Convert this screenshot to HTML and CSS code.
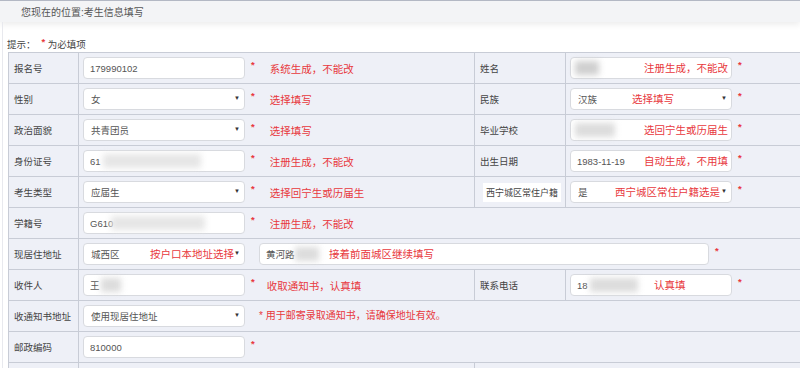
FILE: index.html
```html
<!DOCTYPE html>
<html lang="zh-CN">
<head>
    <meta charset="UTF-8">
    <title>考生信息填写</title>
    <link rel="stylesheet" href="styles.css">
</head>
<body>

    <!-- 位置栏 -->
    <div class="crumb">您现在的位置:考生信息填写</div>

    <div class="main">
        <p class="tip">提示：<span class="star">*</span> 为必填项</p>

        <table class="form">
            <colgroup>
                <col class="c-lbl">
                <col class="c-fld">
                <col class="c-lbl2">
                <col>
            </colgroup>
            <tr>
                <td class="lbl">报名号</td>
                <td><span class="fld"><input type="text" value="179990102"></span><span class="star">*</span><span class="hint">系统生成，不能改</span></td>
                <td class="lbl">姓名</td>
                <td><span class="fld"><input type="text" value=""><i class="blur dark" style="left:5px;width:24px"></i><span class="over r">注册生成，不能改</span></span><span class="star">*</span></td>
            </tr>
            <tr>
                <td class="lbl">性别</td>
                <td><span class="fld sel"><select><option>女</option></select></span><span class="star">*</span><span class="hint">选择填写</span></td>
                <td class="lbl">民族</td>
                <td><span class="fld sel"><select><option>汉族</option></select><span class="over" style="left:62px">选择填写</span></span><span class="star">*</span></td>
            </tr>
            <tr>
                <td class="lbl">政治面貌</td>
                <td><span class="fld sel"><select><option>共青团员</option></select></span><span class="star">*</span><span class="hint">选择填写</span></td>
                <td class="lbl">毕业学校</td>
                <td><span class="fld"><input type="text" value=""><i class="blur" style="left:5px;width:40px"></i><span class="over r">选回宁生或历届生</span></span><span class="star">*</span></td>
            </tr>
            <tr>
                <td class="lbl">身份证号</td>
                <td><span class="fld"><input type="text" value="61"><i class="blur light" style="left:20px;width:98px"></i></span><span class="star">*</span><span class="hint">注册生成，不能改</span></td>
                <td class="lbl">出生日期</td>
                <td><span class="fld"><input type="text" value="1983-11-19"><span class="over r">自动生成，不用填</span></span><span class="star">*</span></td>
            </tr>
            <tr>
                <td class="lbl">考生类型</td>
                <td><span class="fld sel"><select><option>应届生</option></select></span><span class="star">*</span><span class="hint">选择回宁生或历届生</span></td>
                <td class="lbl"><span class="mark">西宁城区常住户籍</span></td>
                <td><span class="fld sel"><select><option>是</option></select><span class="over" style="left:45px">西宁城区常住户籍选是</span></span><span class="star">*</span></td>
            </tr>
            <tr>
                <td class="lbl">学籍号</td>
                <td colspan="3"><span class="fld"><input type="text" value="G610"><i class="blur light" style="left:28px;width:94px"></i></span><span class="star">*</span><span class="hint">注册生成，不能改</span></td>
            </tr>
            <tr>
                <td class="lbl">现居住地址</td>
                <td colspan="3"><span class="fld sel"><select><option>城西区</option></select><span class="over" style="left:67px">按户口本地址选择</span></span><span class="fld wide"><input type="text" value="黄河路"><i class="blur" style="left:36px;width:24px"></i><span class="over" style="left:70px">接着前面城区继续填写</span></span><span class="star">*</span></td>
            </tr>
            <tr>
                <td class="lbl">收件人</td>
                <td><span class="fld"><input type="text" value="王"><i class="blur" style="left:18px;width:20px"></i></span><span class="star">*</span><span class="hint tight">收取通知书，认真填</span></td>
                <td class="lbl">联系电话</td>
                <td><span class="fld"><input type="text" value="18"><i class="blur" style="left:20px;width:48px"></i><span class="over" style="left:84px">认真填</span></span><span class="star">*</span></td>
            </tr>
            <tr>
                <td class="lbl">收通知书地址</td>
                <td colspan="3"><span class="fld sel"><select><option>使用现居住地址</option></select></span><span class="note"><span class="star">*</span> 用于邮寄录取通知书，请确保地址有效。</span></td>
            </tr>
            <tr>
                <td class="lbl">邮政编码</td>
                <td colspan="3"><span class="fld"><input type="text" value="810000"></span><span class="star">*</span></td>
            </tr>
            <tr>
                <td class="lbl"></td>
                <td class="part"></td>
                <td colspan="2"></td>
            </tr>
        </table>
    </div>

</body>
</html>
```

FILE: styles.css
```css
/* General */
html, body {
    overflow: hidden;
}

body {
    margin: 0;
    font-family: "Liberation Sans", "Noto Sans CJK SC", sans-serif;
    font-size: 9.5px;
    color: #444;
    background: #fff;
}

/* Location bar */
.crumb {
    height: 21px;
    line-height: 23px;
    padding-left: 21px;
    border-top: 1px solid #b3b8c4;
    background: #f3f4f6;
    color: #555;
    font-size: 10px;
    box-shadow: 0 3px 6px rgba(0, 0, 0, 0.07);
}

.main {
    margin-left: 2px;
    padding: 0 0 0 5px;
    border-left: 1px solid #e8e9ee;
}

.tip {
    margin: 0 0 0 -1px;
    padding-top: 16px;
    height: 14px;
    line-height: 14px;
    color: #444;
}

.star {
    color: #e8383d;
    font-weight: bold;
    margin-left: 6px;
    position: relative;
    top: -3px;
}

/* Form table */
.form {
    width: 1000px;
    table-layout: fixed;
    border-collapse: collapse;
    background: #eef0f7;
}

.form .c-lbl {
    width: 70px;
}

.form .c-fld {
    width: 396px;
}

.form .c-lbl2 {
    width: 91px;
}

.form td {
    height: 30px;
    padding: 0 0 0 4px;
    border: 1px solid #c8ccd6;
    white-space: nowrap;
    vertical-align: middle;
}

.form td.lbl {
    padding-left: 5px;
    color: #444;
}

.mark {
    display: inline-block;
    background: #fff;
    font-size: 9px;
    padding: 3px 3px;
    margin-left: 3px;
}

.form td.part {
    border-right: 1px solid #c8ccd6;
}

/* Fields */
.fld {
    position: relative;
    display: inline-block;
    width: 162px;
    height: 22px;
    vertical-align: middle;
}

.fld.wide {
    width: 450px;
    margin-left: 14px;
}

.fld input,
.fld select {
    box-sizing: border-box;
    width: 100%;
    height: 22px;
    margin: 0;
    padding: 0 6px;
    border: 1px solid #d8dadf;
    border-radius: 4px;
    background: #fff;
    font: inherit;
    color: #555;
    outline: none;
    -webkit-appearance: none;
    appearance: none;
}

.fld select {
    padding-left: 7px;
}

.fld.sel::after {
    content: "▼";
    position: absolute;
    right: 5px;
    top: 7px;
    font-size: 6px;
    color: #333;
}

.blur {
    position: absolute;
    top: 4px;
    height: 14px;
    background: #dcdcdc;
    filter: blur(3px);
}

.blur.dark {
    background: #cfcfcf;
}

.blur.light {
    background: #e6e6e6;
}

.over {
    position: absolute;
    top: 3px;
    line-height: 16px;
    font-size: 10.5px;
    color: #e8383d;
}

.over.r {
    right: 4px;
}

.hint {
    color: #e8383d;
    font-size: 10.5px;
    margin-left: 15px;
    vertical-align: middle;
}

.hint.tight {
    margin-left: 12px;
}

.note {
    color: #e8383d;
    font-size: 10px;
    margin-left: 14px;
}

.note .star {
    margin-left: 0;
    top: 0;
    font-weight: normal;
}
```
